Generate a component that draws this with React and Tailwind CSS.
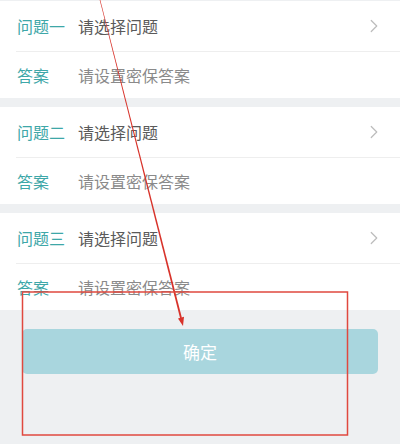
import { ChevronRight } from 'lucide-react';

const sections = ['问题一', '问题二', '问题三'];

function Section({ label }) {
  return (
    <div className="bg-white">
      <div className="flex items-center h-[50px] pl-[17px] pr-[15px]">
        <span className="w-[61px] text-[16px] text-[#3ea7a8]">{label}</span>
        <span className="flex-1 text-[16px] text-[#5a5a5a]">请选择问题</span>
        <ChevronRight size={22} strokeWidth={1.3} className="text-[#bcbcbc]" />
      </div>
      <div className="ml-[16px] h-px bg-[#eeeeee]" />
      <div className="flex items-center h-[46px] pl-[17px]">
        <span className="w-[61px] text-[16px] text-[#3ea7a8]">答案</span>
        <span className="text-[16px] text-[#8a8a8a]">请设置密保答案</span>
      </div>
    </div>
  );
}

export default function App() {
  return (
    <div className="relative w-[400px] h-[444px] overflow-hidden bg-[#eef0f2] font-['Noto_Sans_CJK_SC',sans-serif]">
      <div className="flex flex-col gap-[9px] pt-px">
        {sections.map(s => <Section key={s} label={s} />)}
      </div>
      <div className="mt-[19px] mx-[22px] h-[45px] rounded-[5px] bg-[#a9d6de] flex items-center justify-center text-[17px] text-white">
        确定
      </div>

      {/* red annotation overlay */}
      <svg className="absolute inset-0 pointer-events-none" width="400" height="444" viewBox="0 0 400 444">
        <polygon points="99.7,0 100.3,0 181.9,317.8 180.1,318.2" fill="#d8332b" />
        <polygon points="183,326 184,316.8 178,318.6" fill="#d8332b" />
        <rect x="22.5" y="292" width="325" height="143" fill="none" stroke="#e0483f" strokeWidth="1.5" />
      </svg>
    </div>
  );
}
